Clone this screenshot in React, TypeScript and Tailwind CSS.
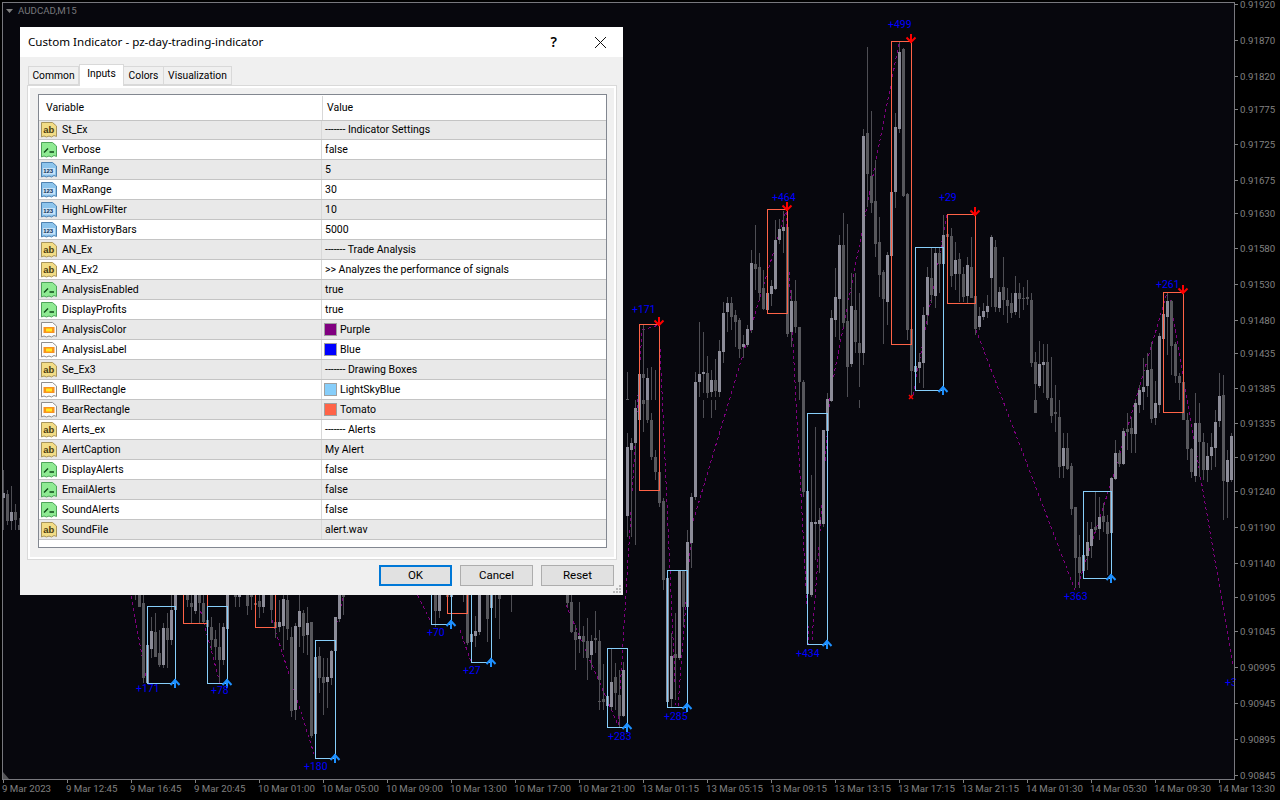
import React from "react";

type C = number[];
const z4: C[] = [
[22,1115,1198,1200,1200,0],[58,1122,1122,1200,1200,1],[70,975,1122,1134,1200,0],[82,1105,1134,1200,1200,1],[94,1100,1199,1200,1200,0],[106,1110,1199,1200,1200,0],
[226,1115,1146,1200,1200,1],[238,965,1122,1146,1190,1],[250,995,1116,1122,1180,1],[262,1068,1120,1180,1195,0],[274,1110,1140,1176,1190,1],[286,1078,1140,1174,1190,0],[298,1020,1053,1176,1190,1],[310,905,939,1055,1090,1],[322,890,909,936,995,1],[334,890,909,950,990,0],[346,930,945,965,1040,0],[358,955,960,1046,1075,0],[370,1005,1032,1040,1075,1],[382,975,987,1034,1040,1],[394,750,789,990,1000,1],[406,675,792,806,870,0],[418,760,801,878,900,0],[430,810,864,926,930,0],[442,860,880,930,940,1],[454,840,858,882,918,1],[466,660,720,866,870,1],[478,658,687,720,732,1],[490,632,681,693,760,1],[502,635,681,1002,1010,0],[514,870,903,996,1040,1],[526,840,903,980,1000,0],[538,980,981,1146,1200,0],[550,1140,1146,1200,1200,0],[622,1180,1198,1200,1200,1],[634,930,954,1200,1200,1],[646,805,891,960,1010,1],[658,705,735,897,1020,1],[670,640,735,968,980,0],[682,672,963,1100,1190,0],[694,820,918,1092,1100,1],[706,820,930,1026,1060,0],[718,880,1029,1059,1160,0],[730,388,408,1059,1095,1],[742,140,399,522,620,0],[754,333,528,610,640,0],[766,480,603,732,770,0],[778,650,726,825,890,0],[790,810,816,897,1032,0],[802,755,765,906,975,1],[814,570,576,768,800,1],[826,340,381,576,624,1],[838,125,156,387,400,1],[850,145,147,588,590,0],[862,580,582,990,1020,0],[874,985,987,1113,1190,0],[886,1080,1098,1116,1140,1],[898,1060,1086,1104,1150,1],[910,920,945,1089,1165,1],[922,800,831,945,975,1],[934,745,834,885,910,0],[946,740,759,888,925,1],[958,740,759,792,880,0],[970,645,705,792,840,1],[982,645,702,711,800,0],
];
const z5: C[] = [
[4,685,708,828,860,0],[16,725,780,822,870,1],[28,760,777,822,905,0],[40,800,822,891,905,0],[52,770,795,888,910,1],[64,710,801,894,895,0],[76,885,888,987,1005,0],[88,920,948,981,990,1],[100,910,933,951,960,1],[112,885,918,936,955,1],[124,705,711,834,920,1],[136,720,741,921,935,0],[148,860,876,924,935,1],[160,770,861,900,945,0],[172,865,900,918,970,0],[184,880,909,939,955,0],[196,828,879,936,945,1],[208,850,879,897,955,0],[220,860,894,897,930,0],[232,840,891,897,915,0],[244,880,900,1089,1100,0],[256,1055,1086,1152,1200,0],[268,1022,1092,1158,1165,1],[280,1032,1086,1095,1180,1],[292,1032,1086,1194,1200,0],[304,1070,1194,1200,1200,0],[316,1155,1199,1200,1200,0],
[568,1155,1170,1200,1200,1],[580,1075,1161,1176,1200,1],[592,1060,1110,1158,1190,1],[604,1025,1107,1200,1200,0],[616,1142,1199,1200,1200,0],[628,1000,1008,1200,1200,1],[640,915,942,1017,1065,1],[652,880,903,951,1065,1],[664,900,903,1038,1125,0],[676,1025,1032,1128,1150,0],[688,1120,1128,1149,1200,0],[700,1140,1146,1200,1200,0],[736,1180,1199,1200,1200,0],[808,1120,1188,1200,1200,1],[820,1125,1185,1200,1200,0],
];
const z8: C[] = [
[28,0,0,1,25,0],[556,0,0,40,40,0],[604,0,0,48,70,0],[616,-45,36,42,95,0],[628,0,52,200,234,0],[640,100,144,198,235,1],[652,100,144,207,210,0],[664,190,198,327,345,0],[676,320,321,474,565,0],[688,405,471,519,565,0],[700,450,465,513,520,1],[712,365,426,468,510,1],[724,365,387,438,475,1],[736,275,381,390,395,0],[748,290,351,387,420,1],[760,310,348,366,395,0],[772,345,366,402,525,0],[784,230,234,399,405,1],[796,120,159,237,240,1],[808,150,159,192,200,0],[820,85,93,192,195,1],[832,40,87,96,150,0],[844,50,84,102,160,0],[856,0,9,102,160,1],[868,0,0,15,40,1],[880,0,0,1,30,0],[904,0,0,57,70,0],[916,0,9,54,75,1],[928,0,0,15,40,1],[1000,0,0,60,60,0],[1012,40,60,147,180,0],[1024,145,147,216,235,0],[1036,0,69,228,245,1],[1048,10,69,126,230,0],[1060,100,126,210,240,0],[1072,130,168,210,245,1],[1084,100,141,168,210,1],[1096,30,66,144,200,1],[1108,0,0,63,80,1],[1120,0,0,243,360,0],[1132,150,180,246,355,1],[1144,100,108,240,245,1],
];
const z7: C[] = [
[574,820,846,921,930,1],[586,790,831,879,930,0],[598,810,885,948,980,0],[610,785,810,948,950,1],[622,100,140,348,410,1],[634,115,130,150,410,1],[646,0,24,130,435,1],[658,0,0,60,100,1],[670,0,0,12,95,0],[682,0,0,60,70,0],[694,40,60,170,180,0],[706,150,170,216,240,0],[718,200,216,308,320,0],[730,295,303,540,570,0],[742,530,534,906,915,1],[754,700,768,897,925,1],[766,640,762,774,900,0],[778,510,510,774,780,1],[790,510,510,621,680,0],[802,390,426,621,650,1],[814,280,291,429,505,1],[826,0,0,291,300,1],[850,0,0,0,55,0],[874,0,0,0,55,0],[886,0,0,0,30,0],
[1150,0,0,276,290,0],[1162,270,273,582,590,1],[1174,225,366,585,590,1],[1186,80,366,372,480,1],[1198,325,360,372,520,1],[1210,90,90,372,380,1],[1222,0,0,93,95,1],[1234,0,0,3,5,1],
];
const z6: C[] = [
[400,15,15,16,30,0],[418,15,15,50,50,0],[430,15,40,265,278,0],[442,100,165,278,280,1],[454,80,124,178,205,1],[466,70,126,200,200,0],[478,120,190,225,232,0],[490,100,114,225,235,1],[502,70,114,150,235,0],[514,15,60,150,165,1],[526,15,15,60,65,1],
[562,15,15,30,50,0],[574,15,40,50,100,0],[586,15,15,62,72,1],[598,15,15,40,100,0],[610,15,40,95,100,0],[622,50,90,110,130,0],[634,80,110,150,180,0],[646,120,147,170,210,0],[658,100,170,210,275,0],[670,100,110,210,225,1],[682,15,15,116,120,1],
[706,15,15,20,50,0],[718,15,15,20,50,1],[742,15,15,48,75,0],[754,15,15,20,60,0],[766,25,38,45,85,0],[778,15,33,50,85,0],[790,15,15,50,70,1],[814,15,15,60,100,0],[826,60,95,115,145,0],[838,30,95,110,125,1],[850,15,27,108,180,1],[862,15,30,118,150,0],[874,110,140,362,380,0],[886,100,108,360,390,1],[898,15,63,110,170,1],[910,60,68,137,190,0],[922,50,100,135,195,1],[934,96,96,438,445,0],[946,190,202,432,440,1],[958,170,198,263,310,0],[970,205,262,278,375,0],[982,205,262,275,355,1],[994,180,183,263,285,1],[1006,80,82,183,190,1],[1018,15,15,86,95,1],[1030,15,15,20,75,0],
];
const z10: C[] = [
[316,15,15,63,110,0],[328,15,15,63,85,1],[352,15,15,20,20,0],[364,15,15,20,20,1],[400,15,15,15,36,0],[412,15,15,158,165,0],[424,100,132,156,185,1],[436,78,123,138,170,1],[448,15,15,126,135,1],[472,15,15,87,155,0],[484,15,15,54,60,1],[496,15,15,16,85,0],[508,15,15,27,147,0],[544,15,15,16,65,0],
[712,15,15,40,50,0],[724,15,36,126,130,0],[736,105,126,150,240,0],[748,36,138,147,190,1],[760,108,138,156,205,0],[772,85,153,204,270,0],[784,135,153,195,240,1],[796,63,144,150,190,0],[808,120,153,270,270,0],
[820,222,222,223,270,0],[844,175,176,177,270,0],[856,246,262,270,270,0],[880,215,240,270,270,1],
];
const zExtra: C[] = [
[3,470,493,498,530,1],[7,490,494,521,525,0],[11,486,512,521,530,1],[15,504,512,520,530,0],[19,518,525,530,530,0],
[599,664,701,701.5,710,0],[603,664,699,702,710,0],[607,657,696,706,708,1],[611,673,682,707,710,1],
];

function toCandles(ox: number, oy: number, rows: C[]) {
  return rows.map(([zx, wt, bt, bb, wb, up]) => ({
    x: Math.round((ox + zx / 3 - 3) / 4) * 4 + 3,
    wt: oy + wt / 3, bt: oy + bt / 3, bb: oy + bb / 3, wb: oy + wb / 3, up,
  }));
}
const candles = [
  ...toCandles(620, 0, z4), ...toCandles(950, 0, z5), ...toCandles(850, 400, z8),
  ...toCandles(420, 400, z7), ...toCandles(0, 590, z6), ...toCandles(330, 590, z10),
  ...zExtra.map(([x, wt, bt, bb, wb, up]) => ({ x, wt, bt, bb, wb, up })),
];

const zig: number[][][] = [
  [[130, 590], [147, 683]], [[199, 605], [220, 683]], [[272, 620], [315, 757]], [[335, 630], [345, 590]],
  [[415, 590], [431, 622]], [[460, 630], [471, 662]], [[566, 605], [618, 725]], [[618, 725], [642, 330], [659, 325]],
  [[659, 325], [676, 705]], [[678, 706], [692, 525], [787, 207]], [[786, 212], [809, 645]],
  [[812, 640], [830, 395], [899, 43]], [[913, 395], [947, 215]], [[976, 330], [1075, 590]],
  [[1078, 585], [1113, 477], [1167, 293]], [[1170, 300], [1233, 665]],
];
const redRects = [[639.5, 324, 20, 166], [767.5, 209, 20, 104], [891.5, 41, 20, 303], [947.5, 214, 28, 89], [1163.5, 292, 20, 120], [183.5, 590, 24, 33], [255.5, 590, 20, 37], [447.5, 590, 20, 23]];
const blueRects = [[147.5, 606, 28, 77], [207.5, 606, 20, 77], [315.5, 640, 20, 118], [431.5, 590, 20, 34], [471.5, 590, 20, 72], [607.5, 648, 20, 79], [667.5, 570, 20, 137], [807.5, 413, 20, 231], [915.5, 247, 28, 143], [1083.5, 491, 28, 87]];
const redArrows = [[659, 322], [787, 207], [911, 39], [975, 212], [1183, 290]];
const blueArrows = [[175, 683], [227, 683], [335, 758], [451, 624], [491, 662], [627, 727], [687, 707], [827, 644], [943, 390], [1111, 578]];
const labels: [string, number, number][] = [["+171", 632, 313], ["+464", 772, 201], ["+499", 888, 28], ["+29", 939, 201], ["+261", 1156, 288], ["+171", 136, 692], ["+78", 211, 694], ["+180", 304, 770], ["+70", 427, 636], ["+27", 463, 674], ["+283", 608, 740], ["+285", 664, 720], ["+434", 796, 657], ["+363", 1064, 600], ["+3", 1225, 686]];
const prices: [string, number][] = [["0.91920", 4], ["0.91870", 40], ["0.91820", 76], ["0.91775", 109], ["0.91725", 144], ["0.91675", 180], ["0.91630", 213], ["0.91580", 248], ["0.91530", 284], ["0.91480", 320], ["0.91435", 353], ["0.91385", 388], ["0.91335", 423], ["0.91290", 457], ["0.91240", 491], ["0.91190", 527], ["0.91140", 563], ["0.91095", 597], ["0.91045", 631], ["0.90995", 667], ["0.90945", 703], ["0.90895", 739], ["0.90845", 775]];
const times = ["9 Mar 2023", "9 Mar 12:45", "9 Mar 16:45", "9 Mar 20:45", "10 Mar 01:00", "10 Mar 05:00", "10 Mar 09:00", "10 Mar 13:00", "10 Mar 17:00", "10 Mar 21:00", "13 Mar 01:15", "13 Mar 05:15", "13 Mar 09:15", "13 Mar 13:15", "13 Mar 17:15", "13 Mar 21:15", "14 Mar 01:30", "14 Mar 05:30", "14 Mar 09:30", "14 Mar 13:30"];

function Chart() {
  return (
    <svg width={1280} height={800} viewBox="0 0 1280 800" className="block">
      <rect width={1280} height={800} fill="#000000" />
      <rect x={3} y={3} width={1231} height={776} fill="#07070d" />
      {zig.map((p, i) => (
        <polyline key={i} points={p.map((q) => q.join(",")).join(" ")} fill="none" stroke="#800080" strokeWidth={1} strokeDasharray="3 3" shapeRendering="crispEdges" />
      ))}
      <g shapeRendering="crispEdges">
        {candles.map((c, i) => (
          <g key={i}>
            <rect x={c.x} y={c.wt} width={1} height={Math.max(c.wb - c.wt, 0)} fill="#4e4e54" />
            {c.bb > c.bt && <rect x={c.x - 1} y={c.bt} width={3} height={c.bb - c.bt} fill={c.up ? "#8c8c98" : "#57575c"} />}
          </g>
        ))}
      </g>
      <g fill="none" strokeWidth={1} shapeRendering="crispEdges">
        {redRects.map(([x, y, w, h], i) => <rect key={i} x={x} y={y + 0.5} width={w} height={h} stroke="#ff6347" />)}
        {blueRects.map(([x, y, w, h], i) => <rect key={i} x={x} y={y + 0.5} width={w} height={h} stroke="#87cefa" />)}
      </g>
      {redArrows.map(([x, y], i) => (
        <g key={i} transform={`translate(${x} ${y})`} fill="none" stroke="#ff0000" strokeWidth={2}>
          <path d="M0 -5 V4" />
          <path d="M-4.5 -1.5 L0 3 L4.5 -1.5" />
        </g>
      ))}
      {blueArrows.map(([x, y], i) => (
        <g key={i} transform={`translate(${x} ${y})`} fill="none" stroke="#1e90ff" strokeWidth={2}>
          <path d="M0 -4 V5" />
          <path d="M-4.5 2 L0 -3 L4.5 2" />
        </g>
      ))}
      <path d="M909 395 L913 399 M913 395 L909 399" stroke="#ff0000" strokeWidth={1.5} />
      <g className="[font-family:Roboto,sans-serif] text-[10.5px]">
        {labels.map(([t, x, y], i) => <text key={i} x={x} y={y} fill="#0000ff">{t}</text>)}
      </g>
      <rect x={2} y={2} width={1232} height={1} fill="#78787e" />
      <rect x={2} y={2} width={1} height={778} fill="#78787e" />
      <rect x={1234} y={2} width={1} height={778} fill="#78787e" />
      <rect x={2} y={779} width={1233} height={1} fill="#78787e" />
      <rect x={1235} y={680} width={45} height={10} fill="#000000" />
      <path d="M3 772 L9 779 H3 Z" fill="#555558" />
      <path d="M6 9 H13 L9.5 13 Z" fill="#808080" />
      <g className="[font-family:Roboto,sans-serif] text-[9.7px]" fill="#808080">
        <text x={18} y={14} fill="#77777c">AUDCAD,M15</text>
        {prices.map(([t, y], i) => (
          <g key={i}>
            <rect x={1235} y={y} width={3} height={1} />
            <text x={1240} y={y + 4}>{t}</text>
          </g>
        ))}
        {times.map((t, i) => (
          <g key={i}>
            <rect x={3 + 64 * i} y={780} width={1} height={3} />
            <text x={2 + 64 * i} y={792}>{t}</text>
          </g>
        ))}
      </g>
    </svg>
  );
}

type Kind = "ab" | "bool" | "num" | "color";

function DocPath({ fill, stroke }: { fill: string; stroke: string }) {
  return <path d="M0.5 0.5 H11.5 L15.5 4 V14.5 L13 13.5 L10.5 15 L8 14 L5.5 15 L3 14 L0.5 15 Z" fill={fill} stroke={stroke} strokeWidth={1} />;
}

function Icon({ kind }: { kind: Kind }) {
  return (
    <svg width={16} height={16} viewBox="0 0 16 16" className="shrink-0">
      {kind === "ab" && (
        <>
          <DocPath fill="#f2dc85" stroke="#a8955a" />
          <text x={2.2} y={11} fontSize={9.5} fontWeight={700} fill="#4a3c10" className="[font-family:'Liberation_Sans',sans-serif]">ab</text>
        </>
      )}
      {kind === "bool" && (
        <>
          <DocPath fill="#8eea92" stroke="#4fa35a" />
          <path d="M3 10.5 L7 6.5 M8.5 10 H13" fill="none" stroke="#0f4a18" strokeWidth={1.4} />
        </>
      )}
      {kind === "num" && (
        <>
          <DocPath fill="#8cc4ec" stroke="#4f82b0" />
          <rect x={2} y={6} width={12} height={6.5} fill="#c8e2f8" />
          <text x={2.2} y={11.4} fontSize={6} fontWeight={700} fill="#0c2e54" className="[font-family:'Liberation_Sans',sans-serif]">123</text>
        </>
      )}
      {kind === "color" && (
        <>
          <DocPath fill="#fbfbfb" stroke="#8e8e8e" />
          <rect x={2.5} y={5} width={11} height={6} fill="#f7931e" />
          <rect x={5} y={6.5} width={6} height={3} fill="#ffe820" />
        </>
      )}
    </svg>
  );
}

const rows: { k: Kind; n: string; v: string; c?: string }[] = [
  { k: "ab", n: "St_Ex", v: "------- Indicator Settings" },
  { k: "bool", n: "Verbose", v: "false" },
  { k: "num", n: "MinRange", v: "5" },
  { k: "num", n: "MaxRange", v: "30" },
  { k: "num", n: "HighLowFilter", v: "10" },
  { k: "num", n: "MaxHistoryBars", v: "5000" },
  { k: "ab", n: "AN_Ex", v: "------- Trade Analysis" },
  { k: "ab", n: "AN_Ex2", v: ">> Analyzes the performance of signals" },
  { k: "bool", n: "AnalysisEnabled", v: "true" },
  { k: "bool", n: "DisplayProfits", v: "true" },
  { k: "color", n: "AnalysisColor", v: "Purple", c: "bg-[#800080]" },
  { k: "color", n: "AnalysisLabel", v: "Blue", c: "bg-[#0000ff]" },
  { k: "ab", n: "Se_Ex3", v: "------- Drawing Boxes" },
  { k: "color", n: "BullRectangle", v: "LightSkyBlue", c: "bg-[#87cefa]" },
  { k: "color", n: "BearRectangle", v: "Tomato", c: "bg-[#ff6347]" },
  { k: "ab", n: "Alerts_ex", v: "------- Alerts" },
  { k: "ab", n: "AlertCaption", v: "My Alert" },
  { k: "bool", n: "DisplayAlerts", v: "false" },
  { k: "bool", n: "EmailAlerts", v: "false" },
  { k: "bool", n: "SoundAlerts", v: "false" },
  { k: "ab", n: "SoundFile", v: "alert.wav" },
];

function Row({ r, i }: { r: (typeof rows)[number]; i: number }) {
  return (
    <div className={`flex border-b border-[#c4c4c4] ${i === 0 ? "h-[19px]" : "h-5"} ${i % 2 === 0 ? "bg-[#e9e9e9]" : "bg-white"}`}>
      <div className="flex w-[283px] items-center gap-[5px] border-r border-[#d8d8d8] pl-[2px]">
        <Icon kind={r.k} />
        <span className={i === 0 ? "pt-px" : "pt-[2px]"}>{r.n}</span>
      </div>
      <div className={`flex flex-1 items-center ${r.c ? "pl-[2px]" : "pl-[3px]"}`}>
        {r.c && <span className={`mr-[3px] h-[13px] w-[13px] border border-[#a0a0a0] ${r.c}`} />}
        <span className={i === 0 ? "pt-px" : "pt-[2px]"}>{r.v}</span>
      </div>
    </div>
  );
}

function Tab({ label, w, active }: { label: string; w: string; active?: boolean }) {
  return active ? (
    <div className={`${w} relative z-10 -mb-px flex h-[22px] items-start justify-center border border-b-0 border-[#d9d9d9] bg-white pt-[4px]`}>{label}</div>
  ) : (
    <div className={`${w} mt-[2px] flex h-[19px] items-center justify-center border border-l-0 border-[#d9d9d9] bg-[#f0f0f0] pt-[2px] first:border-l`}>{label}</div>
  );
}

function Btn({ label, def }: { label: string; def?: boolean }) {
  return (
    <div className={`flex h-[21px] w-[73px] items-center justify-center bg-[#e1e1e1] ${def ? "border-2 border-[#0078d7]" : "border border-[#adadad]"}`}>{label}</div>
  );
}

function Dialog() {
  return (
    <div className="absolute left-5 top-[27px] flex h-[568px] w-[603px] flex-col bg-[#f0f0f0] text-[10.5px] leading-none text-black [font-family:Roboto,sans-serif]">
      <div className="flex h-[30px] items-center bg-white pl-2 pr-[16px] text-[11.6px] [font-family:'Noto_Sans',sans-serif]">
        <span className="flex-1">Custom Indicator - pz-day-trading-indicator</span>
        <span className="mr-[37px] text-[14px] font-semibold">?</span>
        <svg width={13} height={13} viewBox="0 0 13 13"><path d="M1 1 L12 12 M12 1 L1 12" stroke="#111" strokeWidth={1} /></svg>
      </div>
      <div className="flex h-[28px] items-end pl-2 text-[10.3px]">
        <div className="flex">
          <Tab label="Common" w="w-[51px]" />
          <Tab label="Inputs" w="w-[45px]" active />
          <Tab label="Colors" w="w-[40px]" />
          <Tab label="Visualization" w="w-[68px]" />
        </div>
      </div>
      <div className="ml-[7px] h-[475px] w-[590px] border border-[#d9d9d9]">
        <div className="h-full border-2 border-white pb-[9px] pl-2 pr-[7px] pt-[6px]">
          <div className="h-[454px] border border-[#828790] bg-white">
            <div className="flex h-[26px] border-b border-[#c4c4c4] pt-px">
              <div className="flex w-[284px] items-center border-r border-[#d8d8d8] pl-[7px]">Variable</div>
              <div className="flex flex-1 items-center pl-[4px]">Value</div>
            </div>
            {rows.map((r, i) => <Row key={r.n} r={r} i={i} />)}
          </div>
        </div>
      </div>
      <div className="relative flex flex-1 justify-end gap-2 pr-[9px] pt-[5px] text-[11.5px]">
        <Btn label="OK" def />
        <Btn label="Cancel" />
        <Btn label="Reset" />
        <svg width={10} height={10} viewBox="0 0 10 10" className="absolute bottom-[1px] right-[1px]" fill="#b8b8b8">
          <rect x={7} y={1} width={2} height={2} /><rect x={4} y={4} width={2} height={2} /><rect x={7} y={4} width={2} height={2} /><rect x={1} y={7} width={2} height={2} /><rect x={4} y={7} width={2} height={2} /><rect x={7} y={7} width={2} height={2} />
        </svg>
      </div>
    </div>
  );
}

export default function App() {
  return (
    <div className="relative h-[800px] w-[1280px] overflow-hidden bg-black">
      <Chart />
      <Dialog />
    </div>
  );
}
